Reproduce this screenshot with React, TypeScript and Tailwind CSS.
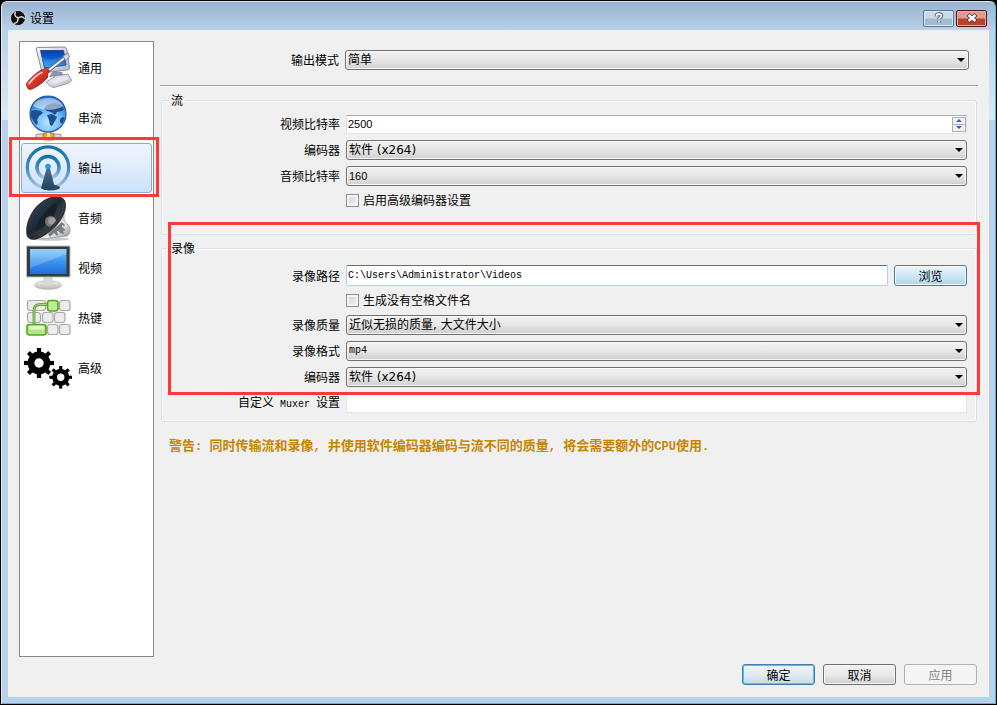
import { useState, type ReactNode } from 'react';
import clsx from 'clsx';

const mixedFont = "font-['DejaVu_Sans','Noto_Sans_CJK_SC',sans-serif] text-xs";
const monoFont = "font-['Liberation_Mono',monospace] text-[10px]";
const digitFont = "font-['Liberation_Sans',sans-serif] text-[11px]";

const warning = '警告: 同时传输流和录像, 并使用软件编码器编码与流不同的质量, 将会需要额外的CPU使用.';

function GeneralIcon() {
  return (
    <svg viewBox="0 0 48 48" className="size-12 shrink-0" aria-hidden="true">
      <defs>
        <linearGradient id="gen-screen" x1="0" y1="0" x2="0" y2="1">
          <stop offset="0" stopColor="#0a3fae" />
          <stop offset="0.55" stopColor="#0b62d6" />
          <stop offset="1" stopColor="#3fb0f5" />
        </linearGradient>
        <linearGradient id="gen-case" x1="0" y1="0" x2="1" y2="1">
          <stop offset="0" stopColor="#f4f5fa" />
          <stop offset="1" stopColor="#b3b8c9" />
        </linearGradient>
        <linearGradient id="gen-handle" x1="0" y1="0" x2="1" y2="1">
          <stop offset="0" stopColor="#f79a8c" />
          <stop offset="0.5" stopColor="#d9352b" />
          <stop offset="1" stopColor="#9c1410" />
        </linearGradient>
      </defs>
      <path d="M25 33l4-6 9 1 2 4z" fill="#8e94a6" />
      <path d="M22 38l10-6 12-2 3 5c1 2 0 3-2 4l-13 4c-3 1-5 0-7-2z" fill="url(#gen-case)" stroke="#8a90a0" strokeWidth="0.8" />
      <path d="M25 38l8-4 10-2 2 3-13 5z" fill="#e6e8f0" />
      <path d="M13.500 3.500l27-.5c1 0 1.800.6 2 1.600l3 19c.2 1-.5 2-1.500 2.200l-24 3c-1 .1-2-.5-2.200-1.600l-5.600-22c-.2-1 .3-1.700 1.300-1.700z" fill="url(#gen-case)" stroke="#777d8e" strokeWidth="0.9" />
      <path d="M16.500 6.500h23l2.500 14.500-21.500 3z" fill="url(#gen-screen)" stroke="#17377c" strokeWidth="0.8" />
      <path d="M18 13c7 4 15 3 22-2l1 6-21 4z" fill="#55bdf6" opacity="0.3" />
      <path d="M25 26L40.500 14" stroke="#666b78" strokeWidth="3.600" strokeLinecap="round" />
      <path d="M25 26L40.500 14" stroke="#eceef4" strokeWidth="1.800" strokeLinecap="round" />
      <path d="M39 12l5-3 1.500 4-4 3.500z" fill="#d6d9e2" stroke="#666b78" strokeWidth="0.8" />
      <path d="M2.500 40c0-2 9-11 14-13.500l4-1.500 1-2 4 4-1.500 2.500-.5 4C20 38 11 44.500 6 45.500c-2 .3-3.800-3.500-3.500-5.500z" fill="url(#gen-handle)" stroke="#8f1712" strokeWidth="0.8" />
      <path d="M5 39.500c4-5 8-9 13-11" stroke="#fbd0c8" strokeWidth="1.600" fill="none" strokeLinecap="round" />
    </svg>
  );
}

function StreamIcon() {
  return (
    <svg viewBox="0 0 48 48" className="size-12 shrink-0" aria-hidden="true">
      <defs>
        <radialGradient id="globe" cx="0.5" cy="0.75" r="0.75">
          <stop offset="0" stopColor="#b6e4ff" />
          <stop offset="0.5" stopColor="#6db8f3" />
          <stop offset="1" stopColor="#1c63c0" />
        </radialGradient>
      </defs>
      <rect x="22" y="36" width="5" height="6" fill="#9aa1ab" />
      <rect x="12" y="40" width="25" height="5" rx="1" fill="#d8dbe0" stroke="#7b818b" strokeWidth="0.8" />
      <rect x="19" y="39" width="11" height="7" rx="1" fill="#f4a32a" stroke="#b26a0e" strokeWidth="0.8" />
      <rect x="23" y="39" width="3" height="7" fill="#fde7a8" />
      <circle cx="24" cy="20" r="18" fill="url(#globe)" stroke="#2559a5" strokeWidth="1.200" />
      <path d="M7 17l4-1 6 1 2 2-4 3-2 4 1 3-2 2-2-3-3-5z" fill="#1b4f8f" />
      <path d="M20 15l3-4 6-2 7 1 4 5-2 2-5 1-2 3-4-3-4-1z" fill="#1b4f8f" />
      <path d="M23 21l5-1 5 3-2 4-3 5-2-1-1-5z" fill="#1b4f8f" />
      <path d="M36 25l3-2 2 1-3 6-2-2z" fill="#1b4f8f" />
      <path d="M9 12C13 2 34 1 39 12c-6 5-22 5-30 0z" fill="#fff" opacity="0.5" />
    </svg>
  );
}

function OutputIcon() {
  return (
    <svg viewBox="0 0 48 48" className="size-12 shrink-0" aria-hidden="true">
      <defs>
        <linearGradient id="ring" x1="0" y1="0" x2="0" y2="1">
          <stop offset="0" stopColor="#176fae" />
          <stop offset="0.5" stopColor="#3f87bd" />
          <stop offset="1" stopColor="#a9c9e6" />
        </linearGradient>
        <linearGradient id="mast" x1="0" y1="0" x2="0" y2="1">
          <stop offset="0" stopColor="#4b6f93" />
          <stop offset="1" stopColor="#263f60" />
        </linearGradient>
      </defs>
      <circle cx="24" cy="23.500" r="20.700" fill="none" stroke="url(#ring)" strokeWidth="3.200" />
      <circle cx="24" cy="23.500" r="11" fill="none" stroke="url(#ring)" strokeWidth="3.400" />
      <ellipse cx="27" cy="43.500" rx="9" ry="3" fill="#2d4a6c" />
      <path d="M23 23h2.500L31 44c-2 3-11 3-14 0z" fill="url(#mast)" />
      <circle cx="24" cy="22.500" r="2.800" fill="#2196f3" />
    </svg>
  );
}

function AudioIcon() {
  return (
    <svg viewBox="0 0 48 48" className="size-12 shrink-0" aria-hidden="true">
      <defs>
        <linearGradient id="cone" x1="0" y1="0" x2="1" y2="1">
          <stop offset="0" stopColor="#42566a" />
          <stop offset="0.5" stopColor="#1d2833" />
          <stop offset="1" stopColor="#4a6076" />
        </linearGradient>
        <linearGradient id="chassis" x1="0" y1="0" x2="1" y2="1">
          <stop offset="0" stopColor="#8c8f92" />
          <stop offset="0.6" stopColor="#f0f0f0" />
          <stop offset="1" stopColor="#85888b" />
        </linearGradient>
      </defs>
      <ellipse cx="27" cy="45" rx="18" ry="1.800" fill="#c9c9c9" />
      <path d="M40 19v8l5 5c2 4 1 8-2 10L18 45l-3-3z" fill="url(#chassis)" stroke="#8a8a8a" strokeWidth="0.7" />
      <path d="M38 28l3 3-2 3 3 2-3 1 1 3-5-1-2 3-3-3-4 4-2-3 7-6z" fill="#777b7e" />
      <path d="M38 31l2 1-2 2zM33 37l3 1-2 2z" fill="#fff" />
      <path d="M29 2.500c5-1 10 0 12 4 2.500 6 0 14-5 21-6 8-16 16-24 18-5 1-9-1-9.500-5C1.500 35 3 27 7 20 12 11 20 4.500 29 2.500z" fill="#2b2f31" />
      <path d="M30 4c4-1 7 0 8 3 1 6-2 13-7 20-6 7-14 13-20 14-5 1-8-1-8-5 0-6 3-13 7-18C15 11 22 5.500 30 4z" fill="url(#cone)" />
      <path d="M32 9c2 4-1 11-5 17-5 6-11 10-16 11 2-9 12-24 21-28z" fill="#141b22" opacity="0.65" />
      <circle cx="26.500" cy="27.500" r="5.500" fill="#77736f" />
      <circle cx="28" cy="27" r="3.800" fill="#a39e9a" />
      <path d="M39.500 8c1 6-2 13-6 19-6 7-14 13-20 15" fill="none" stroke="#3a3c3d" strokeWidth="2.200" />
    </svg>
  );
}

function VideoIcon() {
  return (
    <svg viewBox="0 0 48 48" className="size-12 shrink-0" aria-hidden="true">
      <defs>
        <linearGradient id="vid-screen" x1="0" y1="0" x2="0" y2="1">
          <stop offset="0" stopColor="#7fc6fb" />
          <stop offset="0.5" stopColor="#3f95ec" />
          <stop offset="1" stopColor="#1f6ede" />
        </linearGradient>
        <linearGradient id="vid-base" x1="0" y1="0" x2="0" y2="1">
          <stop offset="0" stopColor="#f3f3f3" />
          <stop offset="1" stopColor="#b5b5b5" />
        </linearGradient>
      </defs>
      <ellipse cx="24" cy="41" rx="13.500" ry="4.500" fill="url(#vid-base)" stroke="#b1b1b1" strokeWidth="0.6" />
      <path d="M19.500 33h9l1.500 7c-3 1.500-9 1.500-12 0z" fill="#d9d9d9" />
      <rect x="2" y="1.500" width="44.500" height="32" rx="1" fill="#bfc1c3" />
      <rect x="3" y="2.500" width="42.500" height="30" fill="#343a40" />
      <rect x="6" y="5" width="36.500" height="25" fill="url(#vid-screen)" />
      <path d="M6 5h36.500v5L6 24z" fill="#fff" opacity="0.2" />
    </svg>
  );
}

const plainKeys = [
  [3.5, 6.5, 18],
  [35.5, 6.5, 10.5],
  [3.5, 18.5, 13],
  [18.5, 18.5, 10.5],
  [30.5, 18.5, 10.5],
  [23.5, 30.5, 10.5],
  [35.5, 30.5, 10.5],
];

function HotkeyIcon() {
  return (
    <svg viewBox="0 0 48 48" className="size-12 shrink-0" aria-hidden="true">
      {plainKeys.map(([x, y, w]) => (
        <rect key={`${x}-${y}`} x={x} y={y} width={w} height="10" rx="2.500" fill="#ececec" stroke="#a9a9a9" strokeWidth="1.200" />
      ))}
      <path d="M10 31V17c0-4 2-6.500 6-6.500h8" fill="none" stroke="#6aa84a" strokeWidth="3" />
      <path d="M10 31V17c0-4 2-6.500 6-6.500h8" fill="none" stroke="#a4cf8b" strokeWidth="1" />
      <rect x="23.500" y="6.500" width="10.500" height="10.500" rx="2.500" fill="#b9ec8b" stroke="#55a81c" strokeWidth="1.600" />
      <rect x="3" y="30.500" width="19" height="10.500" rx="2.500" fill="#b3e884" stroke="#55a81c" strokeWidth="1.600" />
      <rect x="5" y="32" width="15" height="3.500" rx="1.500" fill="#e2f8cd" />
    </svg>
  );
}

function Gear({ cx, cy, r, hole }: { cx: number; cy: number; r: number; hole: number }) {
  const body = r * 0.76;
  const tooth = r * 0.28;
  return (
    <g>
      {[0, 45, 90, 135].map((angle) => (
        <rect
          key={angle}
          x={cx - tooth / 2}
          y={cy - r}
          width={tooth}
          height={r * 2}
          transform={`rotate(${angle} ${cx} ${cy})`}
        />
      ))}
      <circle cx={cx} cy={cy} r={body} />
      <circle cx={cx} cy={cy} r={hole} fill="#fff" />
    </g>
  );
}

function AdvancedIcon() {
  return (
    <svg viewBox="0 0 48 48" className="size-12 shrink-0" aria-hidden="true">
      <Gear cx={15} cy={19} r={15} hole={4.7} />
      <Gear cx={36.7} cy={33.3} r={11.3} hole={3.7} />
    </svg>
  );
}

function ObsLogo() {
  return (
    <svg viewBox="0 0 16 16" className="size-4" aria-hidden="true">
      <circle cx="8" cy="8" r="7.500" fill="#0c0c0c" stroke="#e7eef5" strokeWidth="0.7" />
      {[0, 120, 240].map((angle) => (
        <path
          key={angle}
          d="M5.200 2.400C4.200 5 5.400 7 7.800 7.600"
          fill="none"
          stroke="#dcdcdc"
          strokeWidth="1.500"
          strokeLinecap="round"
          transform={`rotate(${angle} 8 8)`}
        />
      ))}
    </svg>
  );
}

const pages = [
  { id: 'general', label: '通用', icon: <GeneralIcon /> },
  { id: 'stream', label: '串流', icon: <StreamIcon /> },
  { id: 'output', label: '输出', icon: <OutputIcon /> },
  { id: 'audio', label: '音频', icon: <AudioIcon /> },
  { id: 'video', label: '视频', icon: <VideoIcon /> },
  { id: 'hotkeys', label: '热键', icon: <HotkeyIcon /> },
  { id: 'advanced', label: '高级', icon: <AdvancedIcon /> },
];

function Select({ id, options, font = mixedFont }: { id: string; options: string[]; font?: string }) {
  return (
    <div className="relative min-w-0 flex-1">
      <select
        id={id}
        className={clsx(
          'block h-5 w-full appearance-none rounded-[3px] border border-[#707070] bg-linear-to-b from-[#f2f2f2] from-0% via-[#e6e6e6] via-50% to-[#cfcfcf] to-100% pr-5 pl-0.5 leading-4 text-black shadow-[inset_0_0_0_1px_#f8f8f8]',
          font,
        )}
      >
        {options.map((o) => (
          <option key={o}>{o}</option>
        ))}
      </select>
      <svg viewBox="0 0 8 4" className="pointer-events-none absolute top-2 right-1 h-1 w-2" aria-hidden="true">
        <path d="M0 0h8L4 4z" />
      </svg>
    </div>
  );
}

function Row({ id, label, children }: { id?: string; label?: ReactNode; children: ReactNode }) {
  return (
    <div className="flex min-h-5 items-center gap-1.5">
      <div className="w-[169px] shrink-0 text-right leading-4">{label && <label htmlFor={id}>{label}</label>}</div>
      {children}
    </div>
  );
}

function Check({ label }: { label: string }) {
  return (
    <label className="flex items-center gap-1">
      <input
        type="checkbox"
        className="size-[13px] appearance-none border border-[#8e8f8f] bg-linear-to-br from-[#cbcfd5] to-[#f6f6f6] shadow-[inset_0_0_0_2px_#f4f4f4] checked:bg-[#3c7fb1]"
      />
      <span className="leading-4">{label}</span>
    </label>
  );
}

function Group({ title, className, children }: { title: string; className?: string; children: ReactNode }) {
  return (
    <fieldset className={clsx('relative mx-px min-w-0 rounded-[3px] border border-[#d5dfe5] px-[9px] shadow-[inset_0_0_0_1px_#fff]', className)}>
      <legend className="-ml-0.5 h-4 px-0.5 leading-4">{title}</legend>
      {children}
    </fieldset>
  );
}

export default function App() {
  const [page, setPage] = useState('output');
  const [bitrate, setBitrate] = useState(2500);

  return (
    <div className="flex min-h-screen bg-black p-px font-['Noto_Sans_CJK_SC',sans-serif] text-xs text-black">
      <div className="flex min-w-0 flex-1 flex-col rounded-t-md border border-t-[#dbe7f3] border-r-[#35c5e0] border-b-[#35c5e0] border-l-[#e3edf7] bg-[linear-gradient(#98b4d1,#b9d1ea_28px,#dce9f6_118px,#b9d1ea_118px)] px-1.5 pb-1.5">
        {/* Title bar */}
        <header className="flex h-7 items-center gap-1 px-0.5 pt-1">
          <ObsLogo />
          <h1 className="flex-1 leading-4">设置</h1>
          <div className="flex gap-0.5">
            <button
              aria-label="帮助"
              className="flex h-[17px] w-[31px] items-center justify-center rounded-[2px] border border-[#5f7590] bg-linear-to-b from-[#cbdaea] from-45% to-[#a3bbd5] to-55% shadow-[inset_0_0_0_1px_#dce8f4]"
            >
              <svg viewBox="0 0 10 12" className="h-3 w-2.5" aria-hidden="true">
                <path d="M2.500 4.200V3.500C2.500 1.500 7.500 1.500 7.500 3.800c0 1.600-2.500 1.700-2.500 3.500M5 9v1.400" fill="none" stroke="#4c5563" strokeWidth="3.600" />
                <path d="M2.500 4.200V3.500C2.500 1.500 7.500 1.500 7.500 3.800c0 1.600-2.500 1.700-2.500 3.500M5 9v1.400" fill="none" stroke="#fff" strokeWidth="1.800" />
              </svg>
            </button>
            <button
              aria-label="关闭"
              className="flex h-[17px] w-[31px] items-center justify-center rounded-[2px] border border-[#55161a] bg-linear-to-b from-[#dd9a8e] from-45% to-[#bb4129] to-55% shadow-[inset_0_0_0_1px_#e6aea4]"
            >
              <svg viewBox="0 0 12 10" className="h-2.5 w-3" aria-hidden="true">
                <path d="M2 1.500l8 7M10 1.500l-8 7" stroke="#4b3a44" strokeWidth="4" />
                <path d="M2.600 2l6.800 6M9.400 2l-6.800 6" stroke="#fff" strokeWidth="2.400" />
              </svg>
            </button>
          </div>
        </header>

        <div className="flex flex-1 flex-col bg-[#f0f0f0] px-[11px] pt-[11px] pb-3">
          <div className="flex flex-1 gap-1.5">
            {/* Page list */}
            <nav className="w-[135px] shrink-0 border border-[#828790] bg-white p-px">
              {pages.map((p) => (
                <div key={p.id} className="relative">
                  <button
                    onClick={() => setPage(p.id)}
                    className={clsx(
                      'flex h-[50px] w-full items-center gap-1.5 rounded-[3px] border pl-0.5 text-left leading-4',
                      page === p.id
                        ? 'border-[#84acdd] bg-linear-to-b from-[#f0f6fe] to-[#cde2fc]'
                        : 'border-transparent',
                    )}
                  >
                    {p.icon}
                    {p.label}
                  </button>
                  {p.id === 'output' && (
                    <div className="pointer-events-none absolute -top-1.5 -right-[7px] -bottom-1 -left-3 z-10 border-3 border-[#fc3a3a]" />
                  )}
                </div>
              ))}
            </nav>

            {/* Output page */}
            <main className="flex min-w-0 flex-1 flex-col">
              <div className="mt-[9px] flex h-5 items-center gap-1.5 pr-[9px]">
                <label htmlFor="mode" className="w-[179px] shrink-0 text-right leading-4">
                  输出模式
                </label>
                <Select id="mode" options={['简单', '高级']} />
              </div>
              <hr className="mt-[15px] mb-[5px] h-0.5 border-t border-b border-t-[#a0a0a0] border-b-white" />

              <Group title="流" className="pb-6">
                <div className="flex flex-col gap-1.5 pt-1.5">
                  <Row id="vbitrate" label="视频比特率">
                    <div className="flex h-[19px] min-w-0 flex-1 items-center border border-[#e2e3ea] border-t-[#abadb3] bg-white">
                      <input
                        id="vbitrate"
                        value={bitrate}
                        onChange={(e) => setBitrate(Number(e.target.value) || 0)}
                        className={clsx('h-4 min-w-0 flex-1 pl-px outline-none', digitFont)}
                      />
                      <div className="flex h-[15px] w-3.5 flex-col border border-[#a9b0ba] bg-[#f0f0f0]">
                        <button
                          aria-label="增加"
                          onClick={() => setBitrate(bitrate + 1)}
                          className="flex flex-1 items-center justify-center border-b border-[#a9b0ba]"
                        >
                          <svg viewBox="0 0 6 3" className="h-[3px] w-1.5" aria-hidden="true">
                            <path d="M0 3h6L3 0z" fill="#3f5fb5" />
                          </svg>
                        </button>
                        <button
                          aria-label="减少"
                          onClick={() => setBitrate(bitrate - 1)}
                          className="flex flex-1 items-center justify-center"
                        >
                          <svg viewBox="0 0 6 3" className="h-[3px] w-1.5" aria-hidden="true">
                            <path d="M0 0h6L3 3z" fill="#3f5fb5" />
                          </svg>
                        </button>
                      </div>
                    </div>
                  </Row>
                  <Row id="vencoder" label="编码器">
                    <Select id="vencoder" options={['软件 (x264)']} />
                  </Row>
                  <Row id="abitrate" label="音频比特率">
                    <Select id="abitrate" options={['160', '128', '192']} font={digitFont} />
                  </Row>
                </div>
                <div className="mt-1">
                  <Row>
                    <Check label="启用高级编码器设置" />
                  </Row>
                </div>
              </Group>

              <Group title="录像" className="mt-[5px] pb-2">
                <div className="pt-[9px]">
                  <Row id="path" label="录像路径">
                    <input
                      id="path"
                      defaultValue="C:\Users\Administrator\Videos"
                      className={clsx(
                        'h-[21px] min-w-0 flex-1 rounded-[2px] border border-[#b5cfe7] border-t-[#3d7bad] bg-white pl-px outline-none',
                        monoFont,
                      )}
                    />
                    <button className="h-[21px] w-[73px] rounded-[3px] border border-[#3c7fb1] bg-linear-to-b from-[#eaf6fd] from-0% via-[#d0e7f5] via-50% to-[#acd6ea] to-100% leading-4 shadow-[inset_0_0_0_1px_#f2fafe]">
                      浏览
                    </button>
                  </Row>
                </div>
                <div className="mt-1">
                  <Row>
                    <Check label="生成没有空格文件名" />
                  </Row>
                </div>
                <div className="mt-[5px] flex flex-col gap-1.5">
                  <Row id="quality" label="录像质量">
                    <Select id="quality" options={['近似无损的质量, 大文件大小']} />
                  </Row>
                  <Row id="format" label="录像格式">
                    <Select id="format" options={['mp4', 'flv', 'mkv']} font={monoFont} />
                  </Row>
                  <Row id="rencoder" label="编码器">
                    <Select id="rencoder" options={['软件 (x264)']} />
                  </Row>
                  <Row
                    id="muxer"
                    label={
                      <>
                        自定义<span className={monoFont}> Muxer </span>设置
                      </>
                    }
                  >
                    <input
                      id="muxer"
                      className="h-[19px] min-w-0 flex-1 border border-[#e2e3ea] border-t-[#abadb3] bg-white px-px text-xs outline-none"
                    />
                  </Row>
                </div>
                <div className="pointer-events-none absolute -top-[34px] -right-1 bottom-[26px] left-1.5 border-3 border-[#fc3a3a]" />
              </Group>

              <p className="mt-3.5 pl-[9px] text-[13px] leading-[18px] font-bold text-[#c78500]">
                {/* Latin runs are set a size smaller than the Chinese text */}
                {warning.split(/([\x20-\x7e]+)/).map((part, i) =>
                  i % 2 ? (
                    <span key={i} className="font-['Liberation_Mono',monospace] text-xs leading-4">
                      {part}
                    </span>
                  ) : (
                    part
                  ),
                )}
              </p>
            </main>
          </div>

          <footer className="mt-[7px] flex justify-end gap-2 pr-px">
            <button className="h-[21px] w-[73px] rounded-[3px] border border-[#3c7fb1] bg-linear-to-b from-[#f0f6f8] from-0% via-[#e2edf1] via-50% to-[#c7dbe3] to-100% leading-4 shadow-[inset_0_0_0_1px_#43c8f2]">
              确定
            </button>
            <button className="h-[21px] w-[73px] rounded-[3px] border border-[#707070] bg-linear-to-b from-[#f2f2f2] from-0% via-[#ebebeb] via-50% to-[#cfcfcf] to-100% leading-4 shadow-[inset_0_0_0_1px_#f8f8f8]">
              取消
            </button>
            <button
              disabled
              className="h-[21px] w-[73px] rounded-[3px] border border-[#adb2b5] bg-[#f4f4f4] leading-4 text-[#838383]"
            >
              应用
            </button>
          </footer>
        </div>
      </div>
    </div>
  );
}
